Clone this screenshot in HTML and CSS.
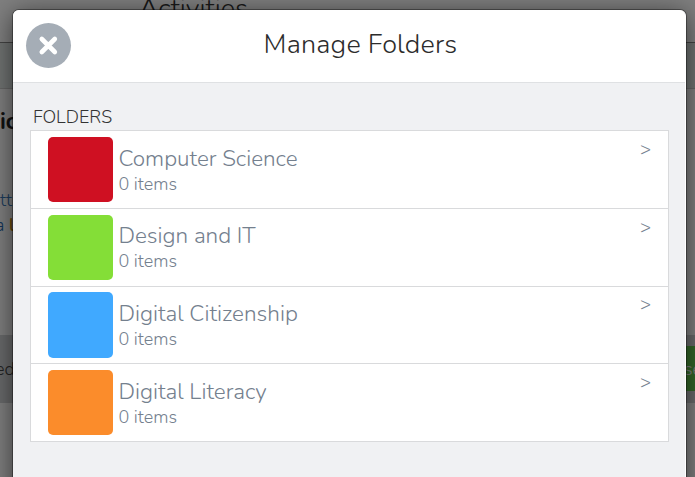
FILE: index.html
```html
<!DOCTYPE html>
<html lang="en">
<head>
<meta charset="utf-8">
<title>Manage Folders</title>
<link rel="stylesheet" href="styles.css">
</head>
<body>
<div class="page">
  <header class="page-top">Activities</header>
  <div class="page-band"></div>
  <main class="page-body">
    <h2 class="page-heading">ic</h2>
    <p class="page-text"><span class="link">tt</span><br><span class="link dark">a</span> <span class="gold">l</span></p>
    <div class="page-panel"><span>ed</span><span class="page-button">se</span></div>
  </main>
</div>
<div class="overlay">
  <section class="modal">
    <header class="modal-header">
      <button class="close" aria-label="Close">
        <svg width="45" height="45" viewBox="0 0 45 45"><path d="M15.8 16L28.8 29M28.8 16L15.8 29" stroke="#fff" stroke-width="4.6" stroke-linecap="round"/></svg>
      </button>
      <h1 class="title">Manage Folders</h1>
    </header>
    <div class="modal-body">
      <h2 class="label">FOLDERS</h2>
      <ul class="folders">
        <li class="folder"><span class="swatch red"></span><div class="info"><div class="name">Computer Science</div><div class="count">0 items</div></div><span class="arrow">&gt;</span></li>
        <li class="folder"><span class="swatch green"></span><div class="info"><div class="name">Design and IT</div><div class="count">0 items</div></div><span class="arrow">&gt;</span></li>
        <li class="folder"><span class="swatch blue"></span><div class="info"><div class="name">Digital Citizenship</div><div class="count">0 items</div></div><span class="arrow">&gt;</span></li>
        <li class="folder"><span class="swatch orange"></span><div class="info"><div class="name">Digital Literacy</div><div class="count">0 items</div></div><span class="arrow">&gt;</span></li>
      </ul>
    </div>
  </section>
</div>
</body>
</html>
```
FILE: styles.css
```css
* { box-sizing: border-box; }
body {
  margin: 0;
  height: 477px;
  overflow: hidden;
  font-family: Nunito, "Open Sans", sans-serif;
  font-weight: 300;
}
h1, h2, p, ul { margin: 0; padding: 0; font-weight: 300; }

.page { height: 477px; background: #fff; overflow: hidden; }
.page-top {
  height: 43px;
  padding-left: 139px;
  border-bottom: 1px solid #888;
  font-size: 27px;
  line-height: 18px;
  color: #333;
}
.page-band { height: 46px; background: #e0e6e5; border-bottom: 1px solid #ccc; }
.page-heading { padding-top: 16px; font-size: 23px; line-height: 34px; font-weight: 700; color: #222; }
.page-text { height: 55px; margin-top: 49px; font-size: 18px; line-height: 25px; white-space: nowrap; }
.link { color: #3978b8; }
.dark { color: #2868b0; margin-left: -5px; }
.gold { color: #c88c10; font-weight: 600; }
.page-panel {
  height: 68px;
  margin-top: 92px;
  display: flex;
  align-items: center;
  justify-content: space-between;
  background: #d2d4d7;
  font-size: 18px;
  color: #444;
}
.page-panel > span:first-child { margin-left: -5px; }
.page-button { width: 15px; height: 45px; margin: -1px -4px 0 0; line-height: 47px; background: #66cc50; color: #fff; box-shadow: -6px 0 0 #66cc50; }

.overlay {
  position: absolute;
  inset: 0;
  padding: 10px 9px 0 13px;
  background: rgba(0, 0, 0, .5);
  overflow: hidden;
}
.modal {
  height: 520px;
  background: #f0f1f3;
  border-right: 1px solid #fff;
  border-radius: 6px;
  box-shadow: 0 0 0 1px rgba(0, 0, 0, .35), 0 4px 26px rgba(0, 0, 0, .6);
}
.modal-header {
  height: 73px;
  display: grid;
  grid-template-columns: 45px 1fr;
  align-items: center;
  padding: 0 22px 2px 13px;
  background: #fff;
  border-bottom: 1px solid #dfe1e3;
  border-radius: 6px 6px 0 0;
}
.close {
  width: 45px;
  height: 45px;
  padding: 0;
  border: 0;
  border-radius: 50%;
  background: #a5adb6;
}
.close svg { display: block; }
.title { padding: 0 13px 0 0; text-align: center; font-size: 27px; line-height: 36px; letter-spacing: .2px; color: #2c2c2c; }
.modal-body { padding: 20px 16px 0 17px; }
.label { height: 27px; padding-left: 3px; font-size: 18px; line-height: 28px; color: #333; }
.folders {
  height: 312px;
  display: grid;
  grid-template-rows: repeat(4, 77.75px);
  list-style: none;
  background: #fff;
  border: 1px solid #d9dadc;
  border-bottom: 0;
}
.folder { display: flex; align-items: flex-start; padding: 5.9px 17px 0; border-bottom: 1px solid #d9dadc; }
.swatch { flex: none; width: 65px; height: 65.3px; border-radius: 5px; }
.red { background: #cf1022; }
.green { background: #84de37; }
.blue { background: #40a9ff; }
.orange { background: #fb8c2b; }
.info { flex: 1; padding: 6.7px 0 0 5.5px; color: #74808e; }
.name { font-size: 22.5px; line-height: 30px; white-space: nowrap; }
.count { font-size: 18px; line-height: 21.5px; }
.arrow { font-size: 18px; line-height: 25px; color: #74808e; }
```
